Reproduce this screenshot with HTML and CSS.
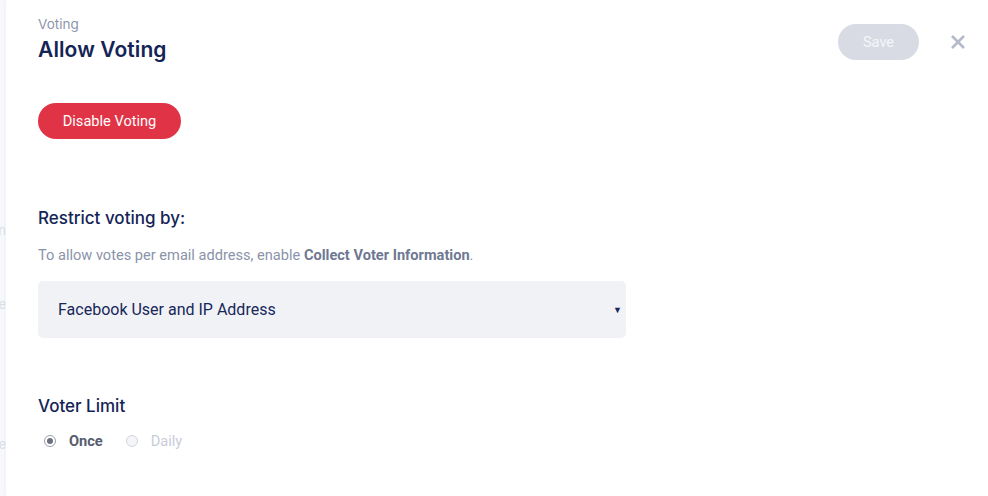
FILE: index.html
```html
<!DOCTYPE html>
<html>
<head>
<meta charset="utf-8">
<link rel="stylesheet" href="styles.css">
</head>
<body>
<div class="app">
  <aside class="behind">
    <div class="bg-row r1">ion</div>
    <div class="bg-row r2">ore</div>
    <div class="bg-row r3">ate</div>
  </aside>
  <main class="panel">
    <header class="head">
      <div class="titles">
        <div class="eyebrow">Voting</div>
        <h1 class="title">Allow Voting</h1>
      </div>
      <div class="actions">
        <button class="btn-save">Save</button>
        <button class="btn-close" aria-label="Close">
          <svg width="16" height="16" viewBox="0 0 16 16"><path d="M2 2 L14 14 M14 2 L2 14" stroke="#b5bacb" stroke-width="2.6" stroke-linecap="butt"/></svg>
        </button>
      </div>
    </header>
    <button class="btn-disable">Disable Voting</button>
    <h2 class="section-title restrict">Restrict voting by:</h2>
    <p class="help">To allow votes per email address, enable <strong>Collect Voter Information</strong>.</p>
    <div class="select">
      <span>Facebook User and IP Address</span>
      <span class="caret">▼</span>
    </div>
    <h2 class="section-title limit">Voter Limit</h2>
    <div class="radios">
      <label class="radio checked"><span class="dot"></span>Once</label>
      <label class="radio"><span class="dot"></span>Daily</label>
    </div>
  </main>
</div>
</body>
</html>
```
FILE: styles.css
```css
* { box-sizing: border-box; }
html, body { margin: 0; padding: 0; }
body {
  width: 988px;
  height: 496px;
  overflow: hidden;
  background: #f7f8fb;
  font-family: Roboto, "Liberation Sans", sans-serif;
}
.app {
  display: flex;
  height: 496px;
}
.behind {
  width: 6px;
  flex: none;
  overflow: hidden;
  display: flex;
  flex-direction: column;
  align-items: flex-end;
}
.bg-row {
  font-size: 14px;
  line-height: 16px;
  color: #dcdfe8;
  white-space: nowrap;
  direction: rtl;
  width: 6px;
}
.r1 { margin-top: 222px; }
.r2 { margin-top: 58px; }
.r3 { margin-top: 124px; }
.panel {
  flex: 1;
  background: #fff;
  padding: 16px 22px 0 32px;
  display: flex;
  flex-direction: column;
  align-items: flex-start;
  box-shadow: -1px 0 3px rgba(30, 40, 80, 0.04);
}
.head {
  width: 100%;
  display: flex;
  justify-content: space-between;
  align-items: flex-start;
}
.eyebrow {
  font-family: Inter, "Noto Sans", sans-serif;
  font-size: 13.5px;
  color: #8d95ab;
  line-height: 16px;
}
.title {
  margin: 4px 0 0 0;
  font-family: Inter, "Noto Sans", sans-serif;
  font-weight: 600;
  font-size: 21px;
  line-height: 28px;
  color: #142456;
  letter-spacing: 0.1px;
}
.actions {
  display: flex;
  align-items: center;
  gap: 31px;
  margin-top: 8px;
}
.btn-save {
  width: 81px;
  height: 36px;
  border: none;
  border-radius: 18px;
  background: #d8dbe4;
  color: #f5f6f9;
  font-family: Roboto, sans-serif;
  font-size: 14.6px;
  padding: 0;
}
.btn-close {
  border: none;
  background: none;
  padding: 0;
  width: 16px;
  height: 16px;
  display: flex;
}
.btn-disable {
  margin-top: 39px;
  width: 143px;
  height: 36px;
  border: none;
  border-radius: 18px;
  background: #e03446;
  color: #fff;
  font-family: Roboto, sans-serif;
  font-size: 14.6px;
  padding: 0;
}
.section-title {
  font-family: Inter, "Noto Sans", sans-serif;
  font-weight: 500;
  font-size: 17px;
  line-height: 22px;
  color: #142456;
  margin: 0;
}
.restrict { margin-top: 68px; }
.help {
  margin: 16px 0 0 0;
  font-size: 14.6px;
  line-height: 20px;
  color: #8a93aa;
}
.help strong {
  color: #6f7892;
  font-weight: 700;
}
.select {
  margin-top: 16px;
  width: 588px;
  height: 57px;
  border-radius: 5px;
  background: #f1f2f6;
  display: flex;
  align-items: center;
  justify-content: space-between;
  padding: 0 4px 0 20px;
  font-size: 16px;
  color: #17275a;
}
.caret {
  font-size: 9px;
  color: #17275a;
}
.limit { margin-top: 57px; }
.radios {
  margin-top: 14px;
  display: flex;
  gap: 23px;
  padding-left: 6px;
}
.radio {
  display: flex;
  align-items: center;
  gap: 13px;
  font-size: 14.6px;
  color: #c8ccd9;
  line-height: 20px;
}
.radio.checked {
  color: #555d6f;
  font-weight: 700;
}
.dot {
  width: 12px;
  height: 12px;
  border-radius: 50%;
  border: 1px solid #d2d5de;
  background: #f4f5f8;
  display: flex;
  align-items: center;
  justify-content: center;
}
.radio.checked .dot {
  border-color: #9a9fac;
  background: #fff;
}
.radio.checked .dot::after {
  content: "";
  width: 6px;
  height: 6px;
  border-radius: 50%;
  background: #6b7080;
}
```
